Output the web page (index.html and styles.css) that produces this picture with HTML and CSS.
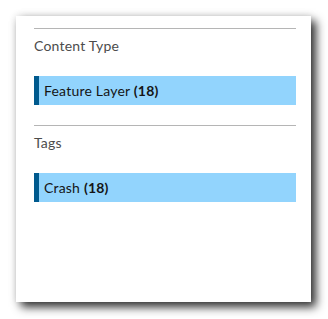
FILE: index.html
```html
<!DOCTYPE html>
<html lang="en">
<head>
  <meta charset="UTF-8">
  <meta name="viewport" content="width=device-width, initial-scale=1.0">
  <title>Filters</title>
  <link rel="stylesheet" href="styles.css">
</head>
<body>

  <!-- Filter Panel -->
  <div class="panel">
    <div class="filter-section">
      <h3 class="filter-title">Content Type</h3>
      <div class="filter-item">Feature Layer <b>(18)</b></div>
    </div>

    <div class="filter-section">
      <h3 class="filter-title">Tags</h3>
      <div class="filter-item">Crash <b>(18)</b></div>
    </div>
  </div>

</body>
</html>
```

FILE: styles.css
```css
/* CSS Styles */

* {
  box-sizing: border-box;
  margin: 0;
  padding: 0;
  font-family: Lato, "Open Sans", sans-serif;
}

body {
  background: #fff;
  padding: 16px;
}

.panel {
  width: 295px;
  height: 286px;
  background: #fff;
  padding: 12px 15px 0 18px;
  box-shadow: 0 0 8px rgba(0, 0, 0, 0.12), 5px 5px 9px rgba(0, 0, 0, 0.8);
}

.filter-section {
  border-top: 1px solid #b5b5b5;
  padding-top: 7px;
  padding-bottom: 20px;
}

.filter-title {
  font-size: 14px;
  font-weight: normal;
  line-height: 20px;
  letter-spacing: 0.2px;
  color: #4c4c4c;
  margin-bottom: 20px;
}

.filter-item {
  height: 29px;
  line-height: 29px;
  background: #92d4fd;
  border-left: 5px solid #005a8e;
  padding-left: 5px;
  font-size: 14px;
  letter-spacing: 0.2px;
  color: #151515;
}

.filter-item b {
  font-weight: bold;
}
```
